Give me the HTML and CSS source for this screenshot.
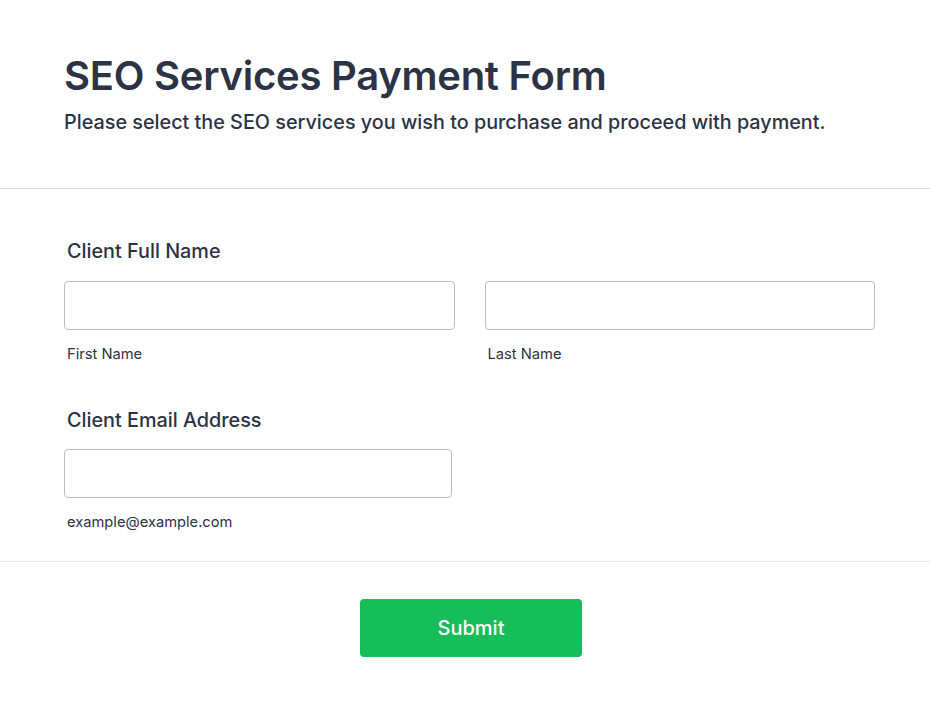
FILE: index.html
```html
<!DOCTYPE html>
<html lang="en">
<head>
<meta charset="utf-8">
<title>SEO Services Payment Form</title>
<link rel="stylesheet" href="styles.css">
</head>
<body>
<div class="page">
  <header class="header">
    <h1 class="title">SEO Services Payment Form</h1>
    <p class="subtitle">Please select the SEO services you wish to purchase and proceed with payment.</p>
  </header>
  <main class="form">
    <div class="field">
      <label class="label">Client Full Name</label>
      <div class="row">
        <div class="col">
          <input class="input" type="text">
          <span class="sublabel">First Name</span>
        </div>
        <div class="col">
          <input class="input" type="text">
          <span class="sublabel">Last Name</span>
        </div>
      </div>
    </div>
    <div class="field field-email">
      <label class="label">Client Email Address</label>
      <div class="col email-col">
        <input class="input" type="email">
        <span class="sublabel">example@example.com</span>
      </div>
    </div>
  </main>
  <footer class="actions">
    <button class="submit" type="button">Submit</button>
  </footer>
</div>
</body>
</html>
```

FILE: styles.css
```css
* { box-sizing: border-box; }
html, body { margin: 0; padding: 0; background: #ffffff; }
body {
  font-family: Inter, "Noto Sans", sans-serif;
  color: #2c3345;
}
.page { width: 930px; }
.header {
  padding: 52px 55px 54px 64px;
  border-bottom: 1px solid #dcdce8;
}
.title {
  margin: 0;
  font-size: 40px;
  font-weight: 600;
  line-height: 48px;
  letter-spacing: -0.25px;
}
.subtitle {
  margin: 10px 0 0;
  font-size: 19.8px;
  font-weight: 500;
  line-height: 24px;
}
.form {
  padding: 50px 55px 30px 64px;
  border-bottom: 1px solid #e6e6ef;
}
.field { margin-bottom: 45px; }
.field:last-child { margin-bottom: 0; }
.label {
  display: block;
  padding-left: 3px;
  font-size: 19.8px;
  font-weight: 500;
  line-height: 24px;
  margin-bottom: 18px;
}
.field-email .label { margin-bottom: 17px; }
.row {
  display: flex;
  gap: 30px;
}
.col {
  display: flex;
  flex-direction: column;
  flex: 1;
}
.email-col { width: 388px; flex: none; }
.input {
  height: 49px;
  width: 100%;
  margin: 0;
  border: 1px solid #b8bdc9;
  border-radius: 4px;
  background: #ffffff;
  font: inherit;
}
.sublabel {
  padding-left: 3px;
  margin-top: 15px;
  font-size: 14.7px;
  line-height: 18px;
}
.actions {
  display: flex;
  justify-content: center;
  padding: 37px 0 40px 12px;
}
.submit {
  width: 222px;
  height: 58px;
  border: none;
  border-radius: 4px;
  background: #18bd5b;
  color: #ffffff;
  font-family: Inter, "Noto Sans", sans-serif;
  font-size: 20px;
  font-weight: 500;
}
```
